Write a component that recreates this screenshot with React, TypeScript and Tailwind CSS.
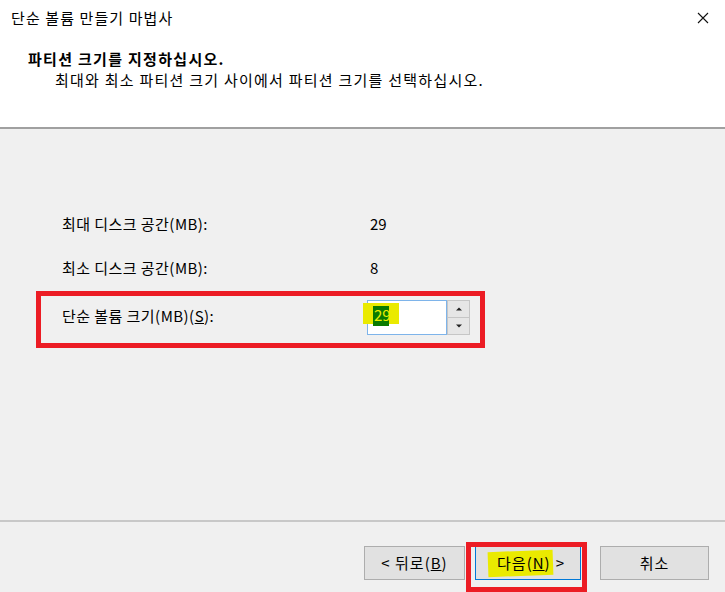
import React from "react"

const font = { fontFamily: '"Noto Sans CJK KR", "Noto Sans", sans-serif' }

function Spinner() {
  return (
    <div className="flex h-[35px] w-[23px] flex-col border border-[#c6c6c6] bg-[#f0f0f0]">
      <div className="flex flex-1 items-center justify-center border-b border-[#c6c6c6] bg-[#e6e6e6]">
        <svg width="6" height="4" viewBox="0 0 6 4">
          <path d="M0 3.5 L3 0.5 L6 3.5 Z" fill="#222" />
        </svg>
      </div>
      <div className="flex flex-1 items-center justify-center bg-[#e6e6e6]">
        <svg width="6" height="4" viewBox="0 0 6 4">
          <path d="M0 0.5 L3 3.5 L6 0.5 Z" fill="#222" />
        </svg>
      </div>
    </div>
  )
}

function WizButton({ children, className }: { children: React.ReactNode; className: string }) {
  return (
    <button
      type="button"
      className={
        "flex h-[34px] items-center justify-center border bg-[#e1e1e1] text-[15px] tracking-[1px] text-black " +
        className
      }
    >
      {children}
    </button>
  )
}

export default function App() {
  return (
    <div className="flex h-[592px] w-[725px] flex-col overflow-hidden bg-[#f0f0f0] text-black" style={font}>
      {/* title + header */}
      <div className="flex h-[129px] flex-col border-b-2 border-[#a0a0a0] bg-white">
        <div className="flex h-[36px] items-center justify-between pl-[11px] pr-[16px]">
          <span className="text-[15px] tracking-[1.1px]">단순 볼륨 만들기 마법사</span>
          <svg width="12" height="12" viewBox="0 0 12 12">
            <path d="M1 1 L11 11 M11 1 L1 11" stroke="#111" strokeWidth="1.1" />
          </svg>
        </div>
        <div className="pl-[28px] pt-[13px]">
          <p className="text-[15px] font-bold leading-[20px] tracking-[1.3px]">파티션 크기를 지정하십시오.</p>
          <p className="pl-[27px] text-[15px] leading-[22px] tracking-[1.25px]">
            최대와 최소 파티션 크기 사이에서 파티션 크기를 선택하십시오.
          </p>
        </div>
      </div>

      {/* body */}
      <div className="flex flex-1 flex-col pt-[83px] text-[15px]">
        <div className="flex h-[24px] items-center pl-[62px]">
          <span className="w-[308px] tracking-[0.45px]">최대 디스크 공간(MB):</span>
          <span>29</span>
        </div>
        <div className="mt-[20px] flex h-[24px] items-center pl-[62px]">
          <span className="w-[308px] tracking-[0.45px]">최소 디스크 공간(MB):</span>
          <span>8</span>
        </div>
        <div className="ml-[36px] mt-[11px] flex h-[57px] w-[449px] items-start border-[5px] border-[#ec1c24] pl-[21px] pt-[4px]">
          <span className="mt-[5px] w-[305px] tracking-[0.45px]">
            단순 볼륨 크기(MB)(<span className="underline">S</span>):
          </span>
          <div className="flex">
            <div className="relative h-[35px] w-[80px] border border-[#7eb4ea] bg-white">
              <span className="absolute left-[-5px] top-[2px] h-[21px] w-[36px] bg-[#eaea00]" />
              <span className="absolute left-[5px] top-[5px] h-[20px] w-[16px] bg-[#0a7a00]" />
              <span className="relative ml-[6px] mt-[3px] block text-[15px] leading-[22px] text-[#e8f000]">29</span>
            </div>
            <Spinner />
          </div>
        </div>
      </div>

      {/* footer */}
      <div className="flex h-[72px] items-start justify-end border-t-2 border-[#c8c8c8] pr-[16px] pt-[24px]">
        <WizButton className="w-[101px] border-[#adadad]">
          &lt; 뒤로(<span className="underline">B</span>)
        </WizButton>
        <div className="relative ml-[10px]">
          <WizButton className="w-[106px] border-[#0078d7] pl-[6px]">
            <span className="relative">
              <span className="absolute left-[-9px] top-[-1px] h-[25px] w-[65px] -rotate-2 bg-[#eaea00]" />
              <span className="relative">
                다음(<span className="underline">N</span>)
              </span>
            </span>
            <span className="ml-[5px]">&gt;</span>
          </WizButton>
          <div className="absolute left-[-9px] top-[-4px] h-[50px] w-[121px] border-[5px] border-[#ec1c24]" />
        </div>
        <WizButton className="ml-[19px] w-[109px] border-[#adadad]">취소</WizButton>
      </div>
    </div>
  )
}
